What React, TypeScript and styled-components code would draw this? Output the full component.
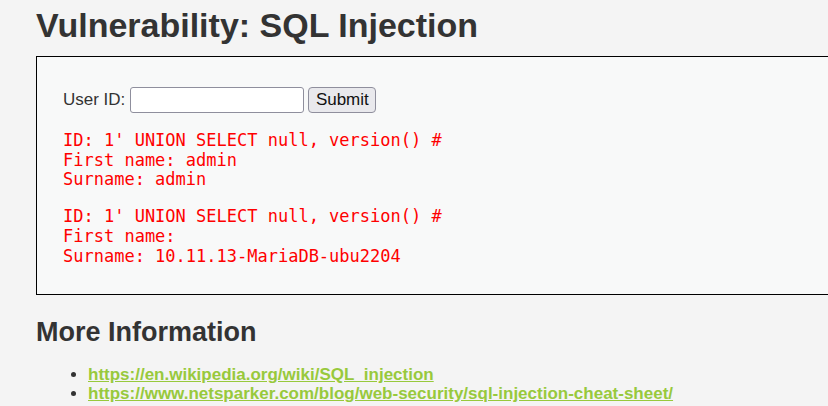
import React from "react";
import styled, { createGlobalStyle } from "styled-components";

const Global = createGlobalStyle`
  html, body {
    margin: 0;
    padding: 0;
    background: #f4f4f4;
    overflow: hidden;
  }
  body {
    font-family: "Liberation Sans", Arial, sans-serif;
    font-size: 17px;
    color: #333;
  }
`;

const Page = styled.div`
  padding: 6px 0 0 36px;
  width: 1000px;
`;

const Title = styled.h1`
  margin: 0 0 11px;
  font-size: 34px;
  font-weight: bold;
  line-height: 39px;
  color: #333;
`;

const CodeArea = styled.div`
  border: 1px solid #000;
  background: #f8f9f9;
  padding: 30px 26px 28px;
  width: 900px;
`;

const FormRow = styled.form`
  display: flex;
  align-items: flex-start;
  height: 27px;
  margin: 0;
`;

const Label = styled.label`
  margin-right: 5px;
  line-height: 26px;
`;

const TextInput = styled.input`
  box-sizing: border-box;
  width: 174px;
  height: 26px;
  border: 1px solid #8f8f9d;
  border-radius: 3px;
  background: #fff;
  padding: 2px 4px;
  font-size: 15px;
  margin: 0 4px 0 0;
`;

const SubmitButton = styled.button`
  box-sizing: border-box;
  width: 68px;
  height: 26px;
  border: 1px solid #8f8f9d;
  border-radius: 4px;
  background: #e9e9ed;
  color: #111;
  font-family: "Liberation Sans", Arial, sans-serif;
  font-size: 17px;
  padding: 0;
  margin: 0;
`;

const Output = styled.pre`
  margin: 17px 0 0;
  font-family: "DejaVu Sans Mono", monospace;
  font-size: 17px;
  line-height: 19.7px;
  color: #ff0000;
`;

const SubTitle = styled.h2`
  margin: 22px 0 0;
  font-size: 27px;
  font-weight: bold;
  line-height: 31px;
  color: #333;
`;

const LinkList = styled.ul`
  margin: 17px 0 0;
  padding-left: 52px;
  line-height: 19px;
`;

const LinkItem = styled.li`
  color: #333;
`;

const Link = styled.a`
  color: #98c93c;
  font-weight: bold;
  text-decoration: underline;
`;

const results = [
  { id: "1' UNION SELECT null, version() #", first: "admin", surname: "admin" },
  { id: "1' UNION SELECT null, version() #", first: "", surname: "10.11.13-MariaDB-ubu2204" },
];

const links = [
  "https://en.wikipedia.org/wiki/SQL_injection",
  "https://www.netsparker.com/blog/web-security/sql-injection-cheat-sheet/",
];

export default function App() {
  return (
    <>
      <Global />
      <Page>
        <Title>Vulnerability: SQL Injection</Title>
        <CodeArea>
          <FormRow onSubmit={(e) => e.preventDefault()}>
            <Label>User ID:</Label>
            <TextInput type="text" name="id" />
            <SubmitButton type="submit">Submit</SubmitButton>
          </FormRow>
          {results.map((r, i) => (
            <Output key={i}>
              {`ID: ${r.id}\nFirst name: ${r.first}\nSurname: ${r.surname}`}
            </Output>
          ))}
        </CodeArea>
        <SubTitle>More Information</SubTitle>
        <LinkList>
          {links.map((l) => (
            <LinkItem key={l}>
              <Link href={l}>{l}</Link>
            </LinkItem>
          ))}
        </LinkList>
      </Page>
    </>
  );
}
